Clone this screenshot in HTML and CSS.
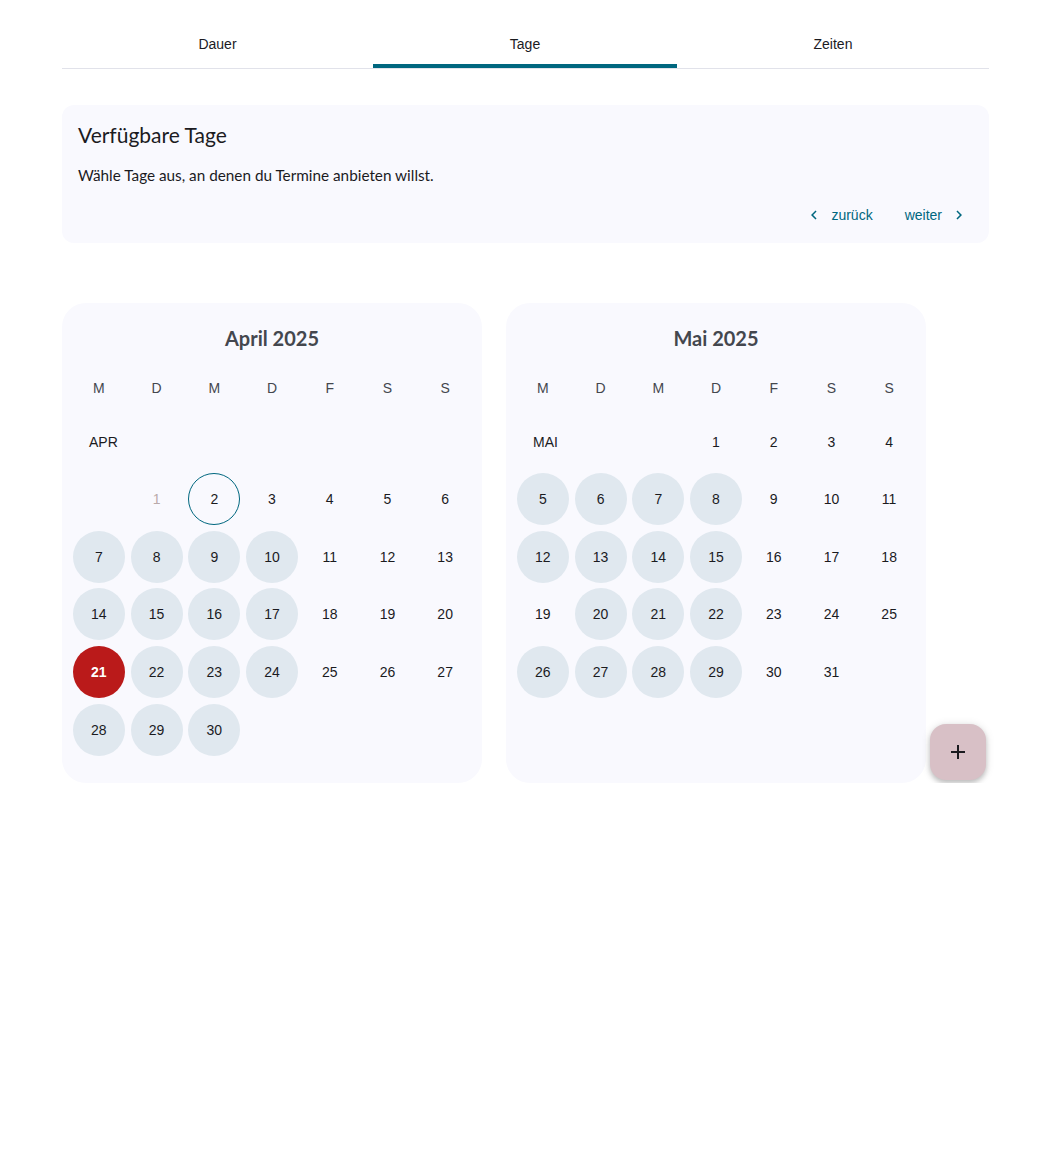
FILE: index.html
```html
<!DOCTYPE html>
<html lang="de">
<head>
<meta charset="utf-8">
<title>Verfügbare Tage</title>
<link rel="stylesheet" href="styles.css">
</head>
<body>
<div class="page">
  <nav class="tabs">
    <div class="tab">Dauer</div>
    <div class="tab active">Tage</div>
    <div class="tab">Zeiten</div>
  </nav>

  <section class="info-card">
    <h1 class="info-title">Verfügbare Tage</h1>
    <p class="info-text">Wähle Tage aus, an denen du Termine anbieten willst.</p>
    <div class="nav-row">
      <button class="nav-btn prev">
        <svg class="chev" viewBox="0 0 24 24"><path d="M15.41 7.41L14 6l-6 6 6 6 1.41-1.41L10.83 12z"/></svg>
        <span>zurück</span>
      </button>
      <button class="nav-btn next">
        <span>weiter</span>
        <svg class="chev" viewBox="0 0 24 24"><path d="M8.59 16.59L10 18l6-6-6-6-1.41 1.41L13.17 12z"/></svg>
      </button>
    </div>
  </section>

  <section class="calendars">
    <div class="calendar">
      <h2 class="cal-title">April 2025</h2>
      <div class="row weekdays"><div>M</div><div>D</div><div>M</div><div>D</div><div>F</div><div>S</div><div>S</div></div>
      <div class="row label-row"><div class="month-label">APR</div></div>
      <div class="row week">
        <div class="cell"></div>
        <div class="cell"><span class="day disabled">1</span></div>
        <div class="cell"><span class="day today">2</span></div>
        <div class="cell"><span class="day">3</span></div>
        <div class="cell"><span class="day">4</span></div>
        <div class="cell"><span class="day">5</span></div>
        <div class="cell"><span class="day">6</span></div>
      </div>
      <div class="row week">
        <div class="cell"><span class="day sel">7</span></div>
        <div class="cell"><span class="day sel">8</span></div>
        <div class="cell"><span class="day sel">9</span></div>
        <div class="cell"><span class="day sel">10</span></div>
        <div class="cell"><span class="day">11</span></div>
        <div class="cell"><span class="day">12</span></div>
        <div class="cell"><span class="day">13</span></div>
      </div>
      <div class="row week">
        <div class="cell"><span class="day sel">14</span></div>
        <div class="cell"><span class="day sel">15</span></div>
        <div class="cell"><span class="day sel">16</span></div>
        <div class="cell"><span class="day sel">17</span></div>
        <div class="cell"><span class="day">18</span></div>
        <div class="cell"><span class="day">19</span></div>
        <div class="cell"><span class="day">20</span></div>
      </div>
      <div class="row week">
        <div class="cell"><span class="day active">21</span></div>
        <div class="cell"><span class="day sel">22</span></div>
        <div class="cell"><span class="day sel">23</span></div>
        <div class="cell"><span class="day sel">24</span></div>
        <div class="cell"><span class="day">25</span></div>
        <div class="cell"><span class="day">26</span></div>
        <div class="cell"><span class="day">27</span></div>
      </div>
      <div class="row week">
        <div class="cell"><span class="day sel">28</span></div>
        <div class="cell"><span class="day sel">29</span></div>
        <div class="cell"><span class="day sel">30</span></div>
      </div>
    </div>

    <div class="calendar">
      <h2 class="cal-title">Mai 2025</h2>
      <div class="row weekdays"><div>M</div><div>D</div><div>M</div><div>D</div><div>F</div><div>S</div><div>S</div></div>
      <div class="row label-row">
        <div class="month-label span3">MAI</div>
        <div class="cell"><span class="day">1</span></div>
        <div class="cell"><span class="day">2</span></div>
        <div class="cell"><span class="day">3</span></div>
        <div class="cell"><span class="day">4</span></div>
      </div>
      <div class="row week">
        <div class="cell"><span class="day sel">5</span></div>
        <div class="cell"><span class="day sel">6</span></div>
        <div class="cell"><span class="day sel">7</span></div>
        <div class="cell"><span class="day sel">8</span></div>
        <div class="cell"><span class="day">9</span></div>
        <div class="cell"><span class="day">10</span></div>
        <div class="cell"><span class="day">11</span></div>
      </div>
      <div class="row week">
        <div class="cell"><span class="day sel">12</span></div>
        <div class="cell"><span class="day sel">13</span></div>
        <div class="cell"><span class="day sel">14</span></div>
        <div class="cell"><span class="day sel">15</span></div>
        <div class="cell"><span class="day">16</span></div>
        <div class="cell"><span class="day">17</span></div>
        <div class="cell"><span class="day">18</span></div>
      </div>
      <div class="row week">
        <div class="cell"><span class="day">19</span></div>
        <div class="cell"><span class="day sel">20</span></div>
        <div class="cell"><span class="day sel">21</span></div>
        <div class="cell"><span class="day sel">22</span></div>
        <div class="cell"><span class="day">23</span></div>
        <div class="cell"><span class="day">24</span></div>
        <div class="cell"><span class="day">25</span></div>
      </div>
      <div class="row week">
        <div class="cell"><span class="day sel">26</span></div>
        <div class="cell"><span class="day sel">27</span></div>
        <div class="cell"><span class="day sel">28</span></div>
        <div class="cell"><span class="day sel">29</span></div>
        <div class="cell"><span class="day">30</span></div>
        <div class="cell"><span class="day">31</span></div>
      </div>
    </div>

    <button class="fab" aria-label="Hinzufügen">
      <svg viewBox="0 0 24 24"><path d="M19 13h-6v6h-2v-6H5v-2h6V5h2v6h6v2z"/></svg>
    </button>
  </section>
</div>
</body>
</html>
```

FILE: styles.css
```css
* { box-sizing: border-box; }

body {
  margin: 0;
  background: #ffffff;
  font-family: "Liberation Sans", Arial, sans-serif;
  color: #1b1b1f;
}

.page {
  width: 927px;
  margin-left: 62px;
  padding-top: 20px;
}

/* Tabs */
.tabs {
  display: grid;
  grid-template-columns: 311px 304px 312px;
  border-bottom: 1px solid #e1e2ea;
}
.tab {
  height: 48px;
  display: flex;
  align-items: center;
  justify-content: center;
  font-size: 14px;
  color: #1b1b1f;
  border-bottom: 4px solid transparent;
  padding-top: 4px;
}
.tab.active {
  border-bottom-color: #00677f;
}

/* Info card */
.info-card {
  margin-top: 36px;
  background: #f9f9fe;
  border-radius: 12px;
  padding: 16px 9px 8px 16px;
}
.info-title {
  margin: 0;
  font-family: "Lato", "Noto Sans", sans-serif;
  font-weight: 400;
  font-size: 21px;
  line-height: 28px;
  color: #1b1b1f;
}
.info-text {
  margin: 14px 0 0;
  font-family: "Lato", "Noto Sans", sans-serif;
  font-size: 15.3px;
  line-height: 24px;
  color: #1b1b1f;
}
.nav-row {
  margin-top: 8px;
  display: flex;
  justify-content: flex-end;
}
.nav-btn {
  height: 40px;
  display: flex;
  align-items: center;
  gap: 8px;
  border: none;
  background: transparent;
  font-family: "Liberation Sans", Arial, sans-serif;
  font-size: 14px;
  color: #00677f;
  cursor: pointer;
}
.nav-btn.prev { padding: 0 16px 0 12px; }
.nav-btn.next { padding: 0 12px 0 16px; }
.chev {
  width: 18px;
  height: 18px;
  fill: #00677f;
}

/* Calendars */
.calendars {
  position: relative;
  margin-top: 60px;
  display: flex;
  gap: 24px;
  align-items: stretch;
}
.calendar {
  width: 420px;
  background: #f9f9fe;
  border-radius: 24px;
  padding: 15px 8px 24px;
}
.cal-title {
  margin: 0;
  text-align: center;
  font-family: "Lato", "Noto Sans", sans-serif;
  font-weight: 700;
  font-size: 20px;
  line-height: 40px;
  color: #44474e;
}
.row {
  display: grid;
  grid-template-columns: repeat(7, 1fr);
}
.weekdays {
  margin-top: 4px;
  height: 52px;
  align-items: center;
  justify-items: center;
  font-size: 14px;
  color: #44474e;
}
.label-row {
  height: 56px;
  align-items: center;
}
.month-label {
  padding-left: 19px;
  font-size: 14px;
  color: #1b1b1f;
}
.month-label.span3 { grid-column: span 3; }
.week {
  height: 57.75px;
}
.cell {
  display: flex;
  align-items: center;
  justify-content: center;
}
.day {
  width: 52px;
  height: 52px;
  border-radius: 50%;
  display: flex;
  align-items: center;
  justify-content: center;
  font-size: 14px;
  color: #1b1b1f;
}
.day.sel { background: #e0e8ef; }
.day.today { border: 1px solid #00677f; }
.day.disabled { color: #b9aaaa; }
.day.active {
  background: #ba1a1a;
  color: #ffffff;
  font-weight: 700;
}

/* FAB */
.fab {
  position: absolute;
  right: 3px;
  bottom: 3px;
  width: 56px;
  height: 56px;
  border: none;
  border-radius: 16px;
  background: #d8c0c6;
  box-shadow: 0 3px 5px rgba(0,0,0,0.2), 0 1px 10px rgba(0,0,0,0.12);
  display: flex;
  align-items: center;
  justify-content: center;
  padding: 0;
  cursor: pointer;
}
.fab svg {
  width: 24px;
  height: 24px;
  fill: #1b1b1f;
}
```
